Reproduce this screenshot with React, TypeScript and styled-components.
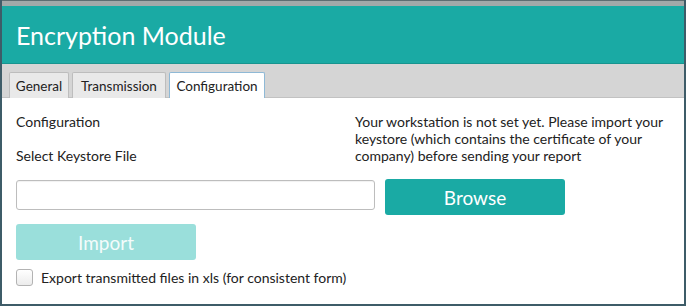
import React, { useState } from 'react';
import styled, { createGlobalStyle } from 'styled-components';

const GlobalStyle = createGlobalStyle`
  html, body {
    margin: 0;
    padding: 0;
    background: #ffffff;
  }
  * {
    box-sizing: border-box;
  }
`;

const Window = styled.div`
  width: 686px;
  height: 306px;
  display: flex;
  flex-direction: column;
  border-left: 2px solid #3e5c68;
  border-right: 2px solid #3e5c68;
  border-bottom: 2px solid #3e5c68;
  font-family: Lato, 'Open Sans', sans-serif;
  color: #222;
  overflow: hidden;
`;

const TitleStrip = styled.div`
  height: 6px;
  background: #a2a9a9;
  border-top: 1px solid #5d6e72;
`;

const Header = styled.div`
  height: 58px;
  background: #1aaaa4;
  display: flex;
  align-items: center;
  padding-left: 14px;
  color: #ffffff;
  font-size: 25px;
  border-bottom: 1px solid #17948f;
`;

const TabBar = styled.div`
  height: 34px;
  background: #d5d5d5;
  border-bottom: 1px solid #c2c2c2;
  display: flex;
  align-items: flex-end;
  gap: 3px;
  padding-left: 7px;
`;

const Tab = styled.div<{ $active?: boolean; $width: number }>`
  width: ${p => p.$width}px;
  height: 26px;
  display: flex;
  align-items: center;
  justify-content: center;
  font-size: 13.5px;
  color: #222;
  background: ${p => (p.$active ? '#ffffff' : '#e9e9e9')};
  border: 1px solid ${p => (p.$active ? '#8fb9d6' : '#bdbdbd')};
  border-bottom: none;
  border-radius: 2px 2px 0 0;
  margin-bottom: -1px;
`;

const Content = styled.div`
  flex: 1;
  padding: 15px 14px 0 14px;
  display: flex;
  flex-direction: column;
`;

const TopRow = styled.div`
  display: grid;
  grid-template-columns: 339px 1fr;
  font-size: 14px;
  line-height: 17px;
`;

const LeftLabels = styled.div`
  display: flex;
  flex-direction: column;
  gap: 17px;
`;

const Notice = styled.div`
  width: 318px;
`;

const FileRow = styled.div`
  display: flex;
  align-items: flex-start;
  gap: 10px;
  margin-top: 15px;
`;

const FileInput = styled.input`
  width: 359px;
  height: 30px;
  margin-top: 1px;
  border: 1px solid #bdbdbd;
  border-radius: 3px;
  background: #fff;
  box-shadow: inset 0 1px 1px rgba(0, 0, 0, 0.06);
  outline: none;
`;

const ActionButton = styled.button<{ $disabled?: boolean }>`
  width: 180px;
  height: 36px;
  border: none;
  border-radius: 3px;
  background: ${p => (p.$disabled ? '#9adfdb' : '#1aaaa4')};
  color: ${p => (p.$disabled ? '#f4fcfb' : '#ffffff')};
  font-family: Lato, 'Open Sans', sans-serif;
  font-size: 19px;
  cursor: pointer;
`;

const ImportRow = styled.div`
  margin-top: 9px;
`;

const CheckRow = styled.label`
  display: flex;
  align-items: center;
  gap: 8px;
  margin-top: 9px;
  font-size: 14px;
`;

const Box = styled.span`
  width: 17px;
  height: 17px;
  border: 1px solid #b3b3b3;
  border-radius: 3px;
  background: linear-gradient(#ffffff, #ececec);
`;

export default function App() {
  const [path, setPath] = useState('');
  const tabs = [
    { label: 'General', width: 60 },
    { label: 'Transmission', width: 94 },
    { label: 'Configuration', width: 96 },
  ];

  return (
    <>
      <GlobalStyle />
      <Window>
        <TitleStrip />
        <Header>Encryption Module</Header>
        <TabBar>
          {tabs.map(t => (
            <Tab key={t.label} $width={t.width} $active={t.label === 'Configuration'}>
              {t.label}
            </Tab>
          ))}
        </TabBar>
        <Content>
          <TopRow>
            <LeftLabels>
              <div>Configuration</div>
              <div>Select Keystore File</div>
            </LeftLabels>
            <Notice>
              Your workstation is not set yet. Please import your keystore (which
              contains the certificate of your company) before sending your report
            </Notice>
          </TopRow>
          <FileRow>
            <FileInput value={path} onChange={e => setPath(e.target.value)} />
            <ActionButton>Browse</ActionButton>
          </FileRow>
          <ImportRow>
            <ActionButton $disabled>Import</ActionButton>
          </ImportRow>
          <CheckRow>
            <Box />
            Export transmitted files in xls (for consistent form)
          </CheckRow>
        </Content>
      </Window>
    </>
  );
}
